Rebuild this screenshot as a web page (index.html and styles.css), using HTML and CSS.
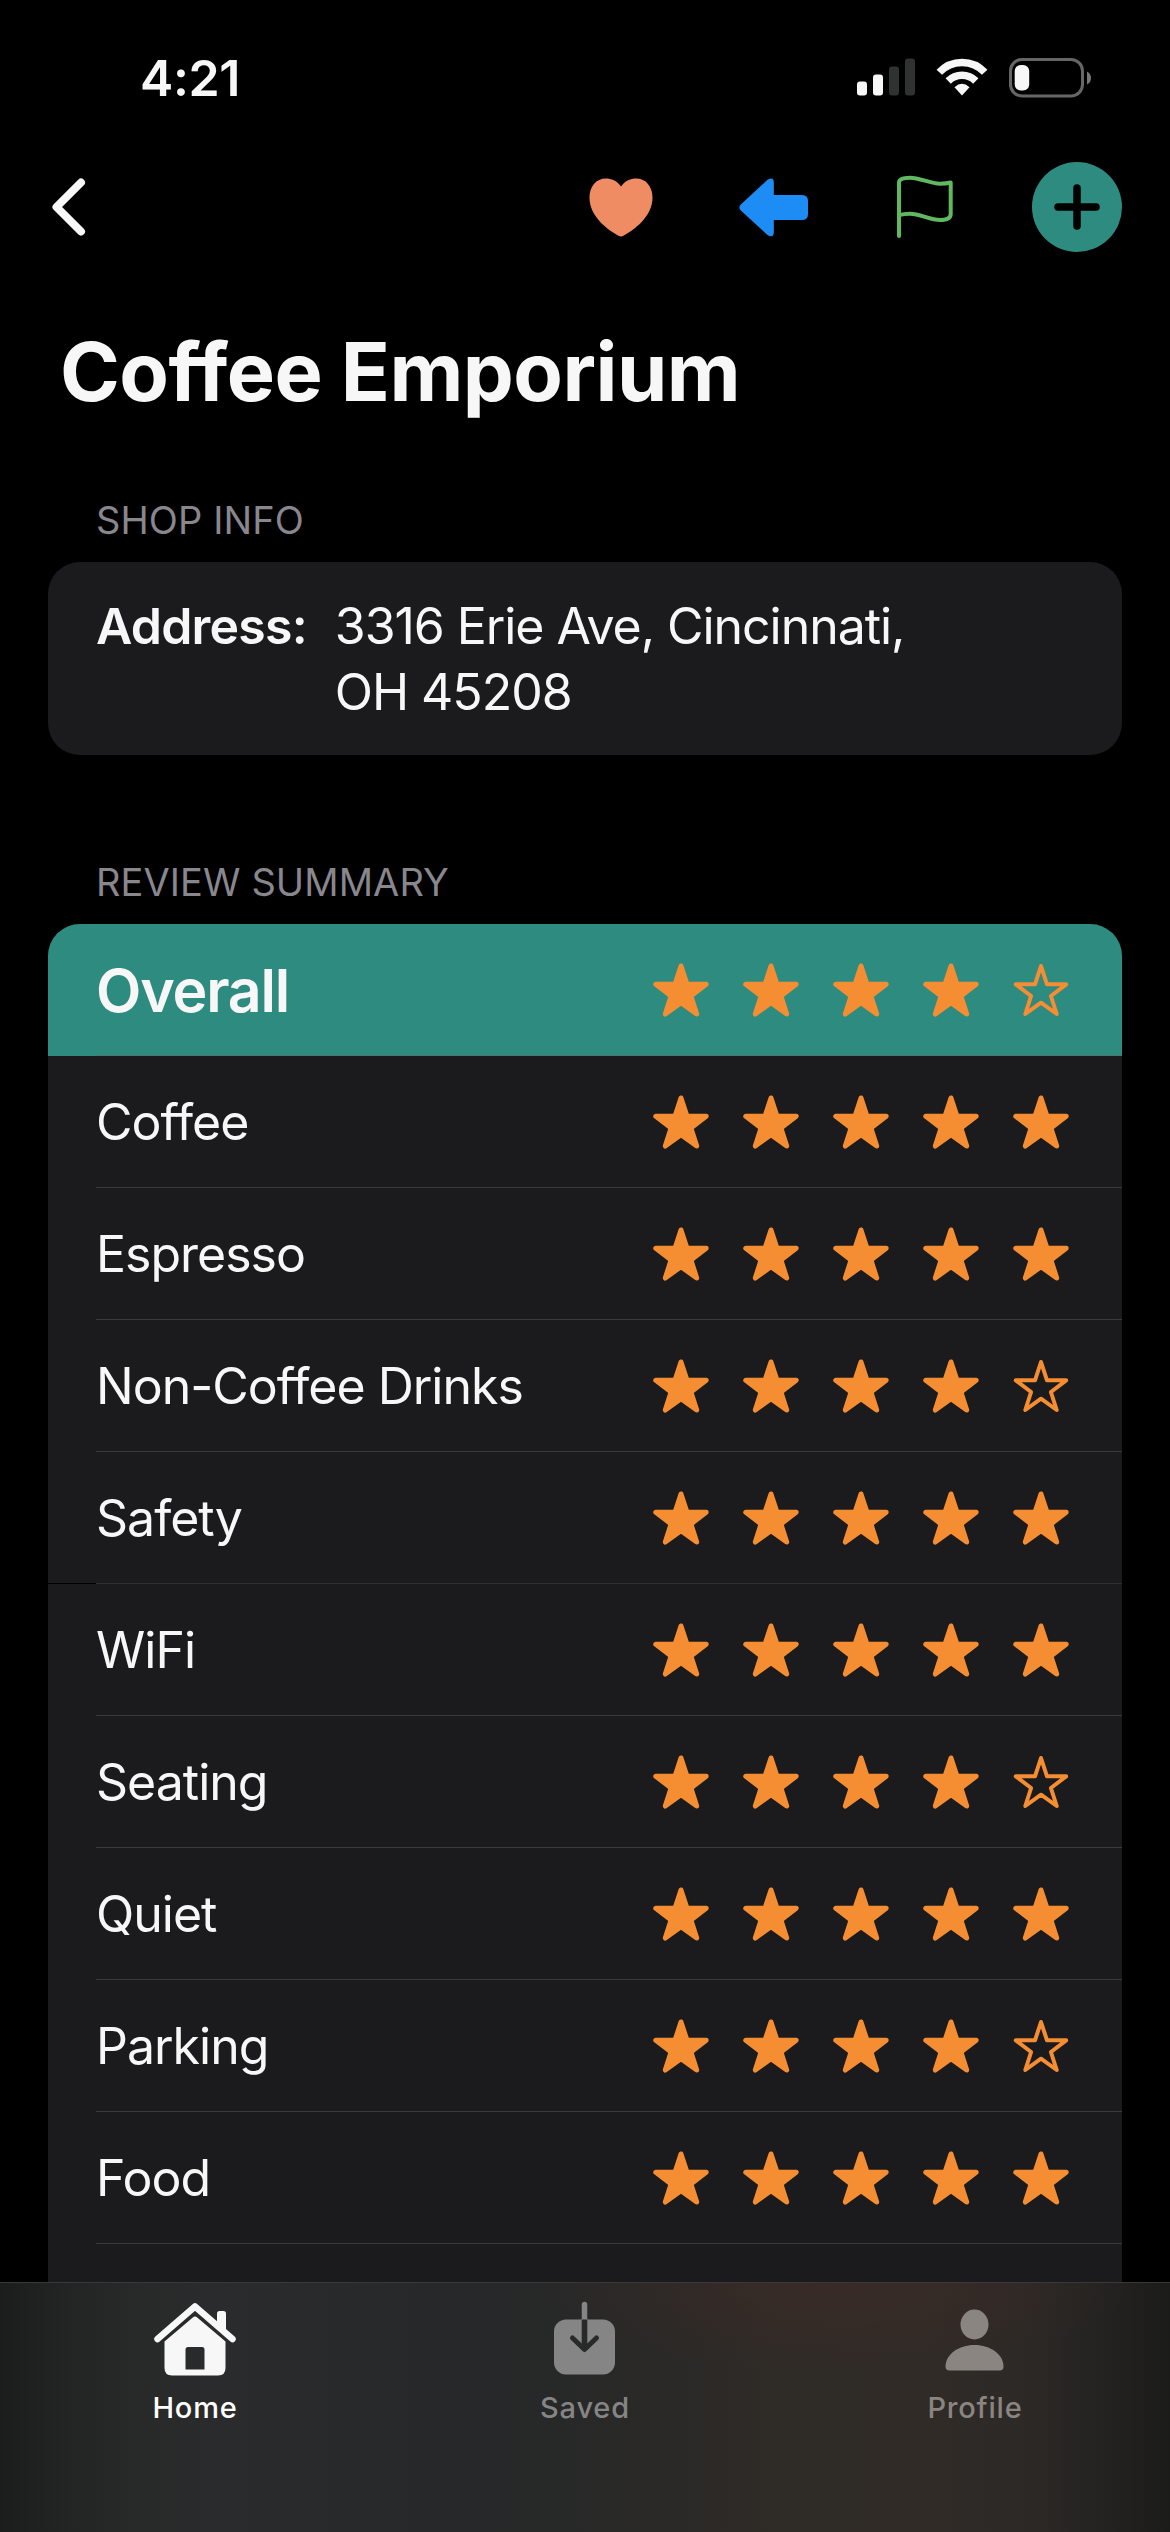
FILE: index.html
```html
<!DOCTYPE html>
<html lang="en">
<head>
<meta charset="utf-8">
<title>Coffee Emporium</title>
<link rel="stylesheet" href="styles.css">
</head>
<body>
<svg class="defs" width="0" height="0">
  <defs>
    <path id="star" d="M28 4 L34 22.300 L53.200 22.300 L37.900 34 L43.700 52 L28 40.700 L12.300 52 L18.100 34 L2.800 22.300 L22 22.300 Z"/>
  </defs>
</svg>
<div class="screen">
  <header class="status">
    <span class="time">4:21</span>
    <div class="indicators">
      <svg width="58" height="38" viewBox="0 0 58 38"><g fill="#f7f7f7"><rect y="23.500" width="10" height="14" rx="3"/><rect x="16" y="16.500" width="10" height="21" rx="3"/></g><g fill="#303131"><rect x="32" y="8.500" width="10" height="29" rx="3"/><rect x="48" y=".5" width="10" height="37" rx="3"/></g></svg>
      <svg class="wifi" width="52" height="38" viewBox="0 0 52 38" fill="none" stroke="#f7f7f7" stroke-width="7.500"><path d="M3.300 14.300 A31 31 0 0 1 48.700 14.300"/><path d="M12.200 23 A19.500 19.500 0 0 1 39.800 23"/><path d="M26 37.500 L18.500 29.200 Q26 22.500 33.500 29.200 Z" fill="#f7f7f7" stroke="none"/></svg>
      <svg class="battery" width="83" height="40" viewBox="0 0 83 40"><rect x="1.500" y="1.500" width="72" height="36.500" rx="11.500" fill="none" stroke="#666" stroke-width="3"/><rect x="5.700" y="7" width="14.500" height="25.500" rx="6" fill="#f7f7f7"/><path d="M78 13.500 Q82 15.500 82 20 Q82 24.500 78 26.500 Z" fill="#777"/></svg>
    </div>
  </header>
  <nav class="toolbar">
    <svg class="back" width="40" height="64" viewBox="0 0 40 64"><path d="M33 7.500 L8.500 32 L33 56.500" fill="none" stroke="#f7f7f7" stroke-width="8" stroke-linecap="round" stroke-linejoin="round"/></svg>
    <div class="actions">
      <svg width="64" height="60" viewBox="0 0 64 60"><path d="M32 9.500 C28 3.500 22 1.500 17 1.500 C7 1.500 .5 9.500 .5 20.500 C.5 37 14 50 29.500 58.800 Q32 60 34.500 58.800 C50 50 63.500 37 63.500 20.500 C63.500 9.500 57 1.500 47 1.500 C42 1.500 36 3.500 32 9.500 Z" fill="#f08c64"/></svg>
      <svg class="share" width="70" height="60" viewBox="0 0 70 60"><path d="M1.800 27.500 L28.500 2.800 Q34.800 -1 34.800 5.500 L34.800 18 L63 18 Q69 18 69 24 L69 37 Q69 43 63 43 L34.800 43 L34.800 55 Q34.800 61.500 28.500 58 L1.800 33.500 Q-1 30.500 1.800 27.500 Z" fill="#1d8df5"/></svg>
      <svg class="flag" width="60" height="64" viewBox="0 0 60 64"><path d="M3 61 V7.500 C3 3.500 9 2.700 14 2.700 C24 2.700 34 8.700 44 8.700 Q50 8.700 54.700 7.500 V39 Q54.700 45 44 45 C34 45 24 38.700 14 38.700 Q8 38.700 3 40.200" fill="none" stroke="#60b860" stroke-width="4" stroke-linecap="round" stroke-linejoin="round"/></svg>
      <svg class="add" width="90" height="90" viewBox="0 0 90 90"><circle cx="45" cy="45" r="45" fill="#2e8b80"/><path d="M26 45 H64 M45 26 V64" stroke="#000" stroke-width="7.500" stroke-linecap="round"/></svg>
    </div>
  </nav>
  <main class="content">
    <h1 class="title"><span>Coffee Emporium</span></h1>
    <h2 class="heading">SHOP INFO</h2>
    <section class="card info">
      <span class="label">Address:</span>
      <span class="value">3316 Erie Ave, Cincinnati,<br>OH 45208</span>
    </section>
    <h2 class="heading review">REVIEW SUMMARY</h2>
    <section class="card ratings" id="ratings"></section>
  </main>
  <footer class="tabs">
    <div class="tab active">
      <svg width="84" height="76" viewBox="0 0 84 76"><path d="M4.500 38 L42 5.500 L79.500 38" fill="none" stroke="#f7f7f7" stroke-width="6.500" stroke-linecap="round" stroke-linejoin="round"/><path d="M64 25 V12.500 Q64 10 66.500 10 H70.500 Q73 10 73 12.500 V32 Z" fill="#f7f7f7"/><path fill-rule="evenodd" d="M39.800 16.500 Q42 14.500 44.200 16.500 L72.500 40.500 V67 Q72.500 74.500 65 74.500 H19 Q11.500 74.500 11.500 67 V40.500 Z M32.500 68.500 H51.500 V48.500 Q51.500 46 49 46 H35 Q32.500 46 32.500 48.500 Z" fill="#f7f7f7"/></svg>
      <span>Home</span>
    </div>
    <div class="tab">
      <svg width="84" height="76" viewBox="0 0 84 76"><rect x="11" y="18.500" width="61" height="55" rx="12" fill="#858585"/><path d="M41.500 18.500 V3.500" stroke="#858585" stroke-width="5.500" stroke-linecap="round"/><rect x="38" y="18.500" width="7" height="4" fill="#858585"/><path d="M38.700 18.500 H44.300 V46 H38.700 Z" fill="#282929"/><path d="M29.500 37 L41.500 48.500 L53.500 37" fill="none" stroke="#282929" stroke-width="5" stroke-linecap="round" stroke-linejoin="round"/></svg>
      <span>Saved</span>
    </div>
    <div class="tab profile">
      <svg width="84" height="76" viewBox="0 0 84 76" fill="#8a8581"><ellipse cx="41.500" cy="23.500" rx="14" ry="15"/><path d="M12.500 65.500 C12.500 53.500 25.500 44 41.500 44 C57.500 44 70.500 53.500 70.500 65.500 Q70.500 69.500 66.500 69.500 H16.500 Q12.500 69.500 12.500 65.500 Z"/></svg>
      <span>Profile</span>
    </div>
  </footer>
</div>
<script src="ratings.js"></script>
</body>
</html>
```
FILE: ratings.js
```js
const ratings = [
  ["Overall", 4], ["Coffee", 5], ["Espresso", 5], ["Non-Coffee Drinks", 4],
  ["Safety", 5], ["WiFi", 5], ["Seating", 4], ["Quiet", 5], ["Parking", 4], ["Food", 5]
];
const star = (full) =>
  `<svg class="star ${full ? "full" : "empty"}" width="56" height="56" viewBox="0 0 56 56"><use href="#star"/></svg>`;
document.getElementById("ratings").innerHTML = ratings.map(([name, score]) =>
  `<div class="row row-${name.toLowerCase().replace(" ", "-")}"><div class="line"><span class="name">${name}</span>
  <span class="stars">${[1, 2, 3, 4, 5].map((n) => star(n <= score)).join("")}</span></div></div>`
).join("");
```
FILE: styles.css
```css
* { box-sizing: border-box; }
body { margin: 0; background: #000; color: #f7f7f7; font-family: Inter, "Liberation Sans", sans-serif; }
svg { display: block; flex: none; }
.defs { position: absolute; }
.screen { width: 1170px; height: 2532px; display: flex; flex-direction: column; overflow: hidden; background: #000; }
.status { flex: none; height: 141px; padding: 58px 78px 0 140px; display: flex; justify-content: space-between; align-items: flex-start; }
.time { font-size: 50px; font-weight: 600; line-height: 40px; letter-spacing: -0.4px; }
.indicators { display: flex; }
.wifi { margin-left: 21px; }
.battery { margin-left: 21px; }
.toolbar { flex: none; height: 132px; padding: 0 48px; display: flex; align-items: center; justify-content: space-between; }
.actions { display: flex; align-items: center; }
.share { margin-left: 86px; }
.flag { margin-left: 87px; }
.add { margin-left: 76px; }
.content { flex: 1; min-height: 0; overflow: hidden; padding: 0 48px; }
.title { margin: 0; padding: 49px 0 0 12px; height: 223px; font-size: 81px; line-height: 100px; font-weight: 700; letter-spacing: -0.55px; white-space: nowrap; font-variant-ligatures: none; }
.heading { margin: 0; padding: 0 48px; height: 66px; font-size: 38px; line-height: 48px; font-weight: 400; letter-spacing: .1px; color: #88878d; }
.review { height: 66px; margin-top: 103px; }
.card { background: #1b1b1d; border-radius: 32px; }
.info { height: 193px; padding: 31px 48px; display: flex; gap: 28px; font-size: 50px; line-height: 66px; letter-spacing: -1.05px; white-space: nowrap; }
.label { font-weight: 600; letter-spacing: -.8px; }
.ratings { overflow: hidden; border-radius: 32px 32px 0 0; height: 1600px; }
.row { height: 132px; padding-left: 48px; }
.line { height: 132px; padding-right: 53px; display: flex; align-items: center; justify-content: space-between; border-bottom: 1px solid #3b3b3e; }
.name { font-size: 50px; letter-spacing: -1px; padding-top: 1px; }
.row-overall { background: #2e8b80; }
.row-overall .line { border-color: #4f7470; }
.row-overall .name { font-size: 59px; font-weight: 600; letter-spacing: -1.2px; }
/* the separator under Safety opens a gap at the leading edge */
.row-safety { background: linear-gradient(#000, #000) left bottom / 48px 1px no-repeat; }
.row-safety .line { border-color: #303032; }
.stars { display: flex; gap: 34px; }
.star { fill: #f58d33; stroke: #f58d33; stroke-width: 5; stroke-linejoin: round; }
.star.empty { fill: none; stroke-width: 4; }
.tabs { flex: none; height: 250px; padding-top: 18px; border-top: 1px solid #39393c; display: grid; grid-template-columns: repeat(3, 1fr); background: radial-gradient(ellipse 300px 90px at 830px 0, rgba(62, 42, 38, .6), transparent), linear-gradient(90deg, #1b1c1c 0, #232424 70px, #282a29 140px, #2a2b2d 230px, #272829 420px, #272828 560px, #2a2927 660px, #2f2b27 780px, #302b27 920px, #2d2926 1020px, #242321 1100px, #1b1b1a 1170px); }
.tab { display: flex; flex-direction: column; align-items: center; color: #858585; font-size: 29px; line-height: 36px; font-weight: 500; letter-spacing: .8px; }
.tab span { margin-top: 13px; }
.active { color: #fff; }
.profile { color: #8a8581; }
```
